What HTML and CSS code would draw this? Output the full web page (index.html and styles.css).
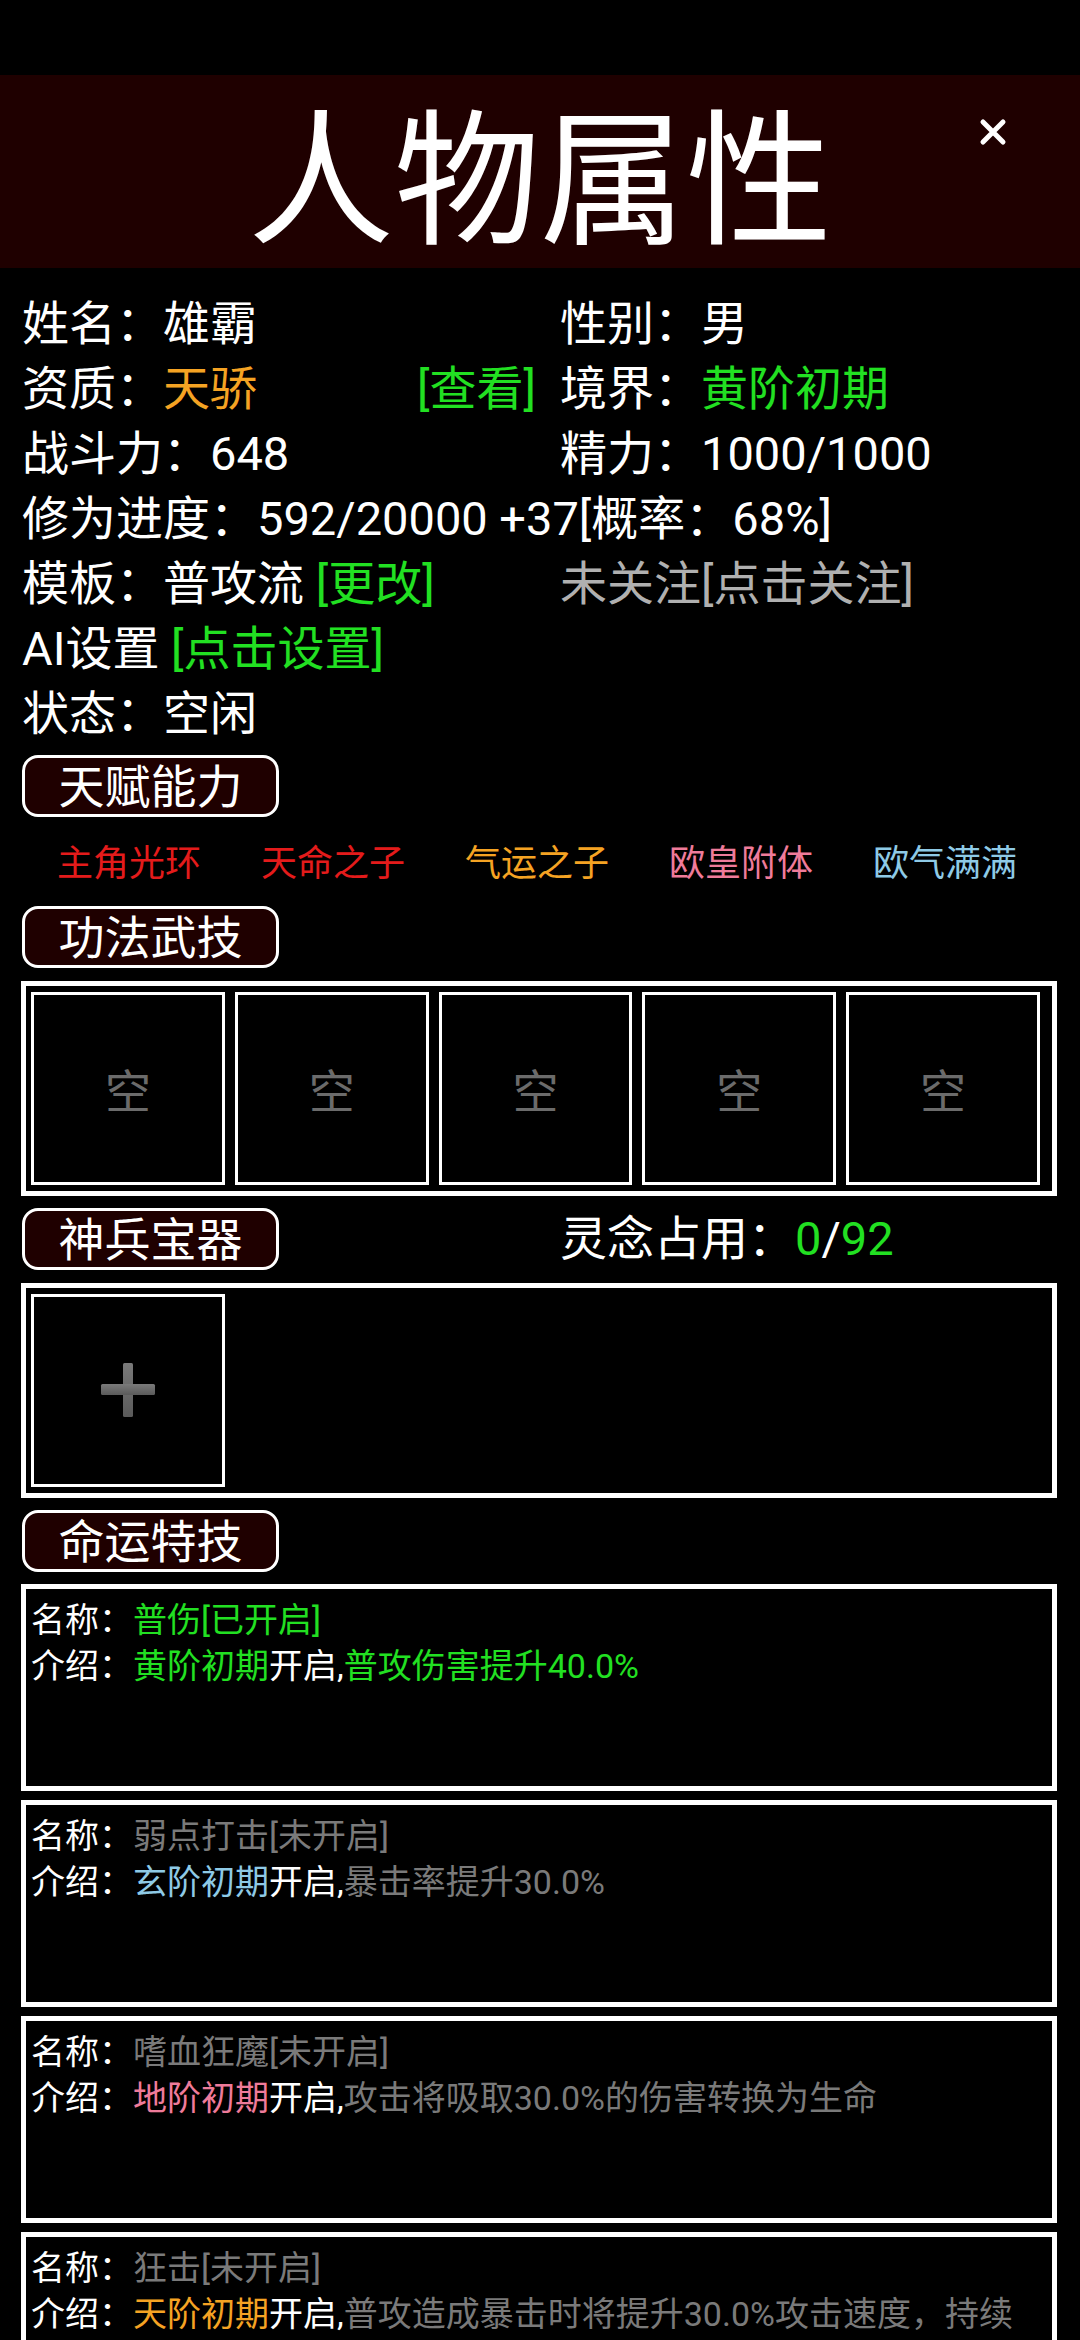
FILE: index.html
```html
<!DOCTYPE html>
<html lang="zh-CN">
<head>
    <meta charset="UTF-8">
    <meta name="viewport" content="width=device-width, initial-scale=1.0">
    <title>人物属性</title>
    <link rel="stylesheet" href="styles.css">
</head>
<body>

    <div class="status-bar"></div>

    <header class="title-bar">
        <h1>人物属性</h1>
        <button class="close-btn" aria-label="关闭">
            <svg width="28" height="28" viewBox="0 0 28 28">
                <path d="M4 4 L24 24 M24 4 L4 24" stroke="#fff" stroke-width="5" stroke-linecap="round" fill="none"/>
            </svg>
        </button>
    </header>

    <!-- Basic info -->
    <section class="info">
        <div>姓名：雄霸</div>
        <div>性别：男</div>

        <div class="split"><span>资质：<span class="orange">天骄</span></span><span class="green">[查看]</span></div>
        <div>境界：<span class="green">黄阶初期</span></div>

        <div>战斗力：648</div>
        <div>精力：1000/1000</div>

        <div class="wide">修为进度：592/20000 +37[概率：68%]</div>

        <div>模板：普攻流 <span class="green">[更改]</span></div>
        <div class="light-gray">未关注[点击关注]</div>

        <div class="wide">AI设置 <span class="green">[点击设置]</span></div>
        <div class="wide">状态：空闲</div>
    </section>

    <!-- Talents -->
    <div class="section-head">
        <div class="tag">天赋能力</div>
    </div>
    <div class="talents">
        <span class="red">主角光环</span>
        <span class="red">天命之子</span>
        <span class="orange">气运之子</span>
        <span class="pink">欧皇附体</span>
        <span class="blue">欧气满满</span>
    </div>

    <!-- Skills -->
    <div class="section-head">
        <div class="tag">功法武技</div>
    </div>
    <div class="slot-box">
        <div class="slot">空</div>
        <div class="slot">空</div>
        <div class="slot">空</div>
        <div class="slot">空</div>
        <div class="slot">空</div>
    </div>

    <!-- Treasures -->
    <div class="section-head spaced">
        <div class="tag">神兵宝器</div>
        <div class="spirit">灵念占用：<span class="green">0</span>/<span class="green">92</span></div>
    </div>
    <div class="slot-box">
        <div class="slot fixed">
            <svg width="56" height="56" viewBox="0 0 56 56">
                <defs>
                    <linearGradient id="plusShade" x1="0" y1="0" x2="0" y2="1">
                        <stop offset="0" stop-color="#7a7a7a"/>
                        <stop offset="1" stop-color="#5a5a5a"/>
                    </linearGradient>
                </defs>
                <rect x="23" y="1" width="10" height="54" rx="1.5" fill="url(#plusShade)"/>
                <rect x="1" y="22" width="54" height="11" rx="1.5" fill="url(#plusShade)"/>
            </svg>
        </div>
    </div>

    <!-- Fate skills -->
    <div class="section-head">
        <div class="tag">命运特技</div>
    </div>

    <div class="card">
        <div>名称：<span class="green">普伤[已开启]</span></div>
        <div>介绍：<span class="green">黄阶初期</span>开启,<span class="green">普攻伤害提升40.0%</span></div>
    </div>

    <div class="card">
        <div>名称：<span class="gray">弱点打击[未开启]</span></div>
        <div>介绍：<span class="blue">玄阶初期</span>开启,<span class="gray">暴击率提升30.0%</span></div>
    </div>

    <div class="card">
        <div>名称：<span class="gray">嗜血狂魔[未开启]</span></div>
        <div>介绍：<span class="pink">地阶初期</span>开启,<span class="gray">攻击将吸取30.0%的伤害转换为生命</span></div>
    </div>

    <div class="card">
        <div>名称：<span class="gray">狂击[未开启]</span></div>
        <div>介绍：<span class="orange">天阶初期</span>开启,<span class="gray">普攻造成暴击时将提升30.0%攻击速度，持续</span></div>
    </div>

</body>
</html>
```

FILE: styles.css
```css
body {
    margin: 0;
    background: #000;
    color: #fff;
    font-family: Roboto, "Noto Sans CJK SC", sans-serif;
    font-size: 47px;
}
.status-bar {
    height: 75px;
}
.title-bar {
    position: relative;
    height: 193px;
    background: #1f0000;
    display: flex;
    justify-content: center;
    align-items: center;
}
.title-bar h1 {
    margin: 22px 0 0;
    font-size: 146px;
    font-weight: 400;
    line-height: 1;
}
.close-btn {
    position: absolute;
    top: 43px;
    right: 73px;
    padding: 0;
    border: none;
    background: none;
    line-height: 0;
}
.info {
    display: grid;
    grid-template-columns: 514px 1fr;
    column-gap: 24px;
    padding: 23px 22px 0;
    line-height: 65px;
    white-space: nowrap;
}
.info .wide {
    grid-column: 1 / -1;
}
.split {
    display: flex;
    justify-content: space-between;
}
.section-head {
    display: grid;
    grid-template-columns: 514px 1fr;
    column-gap: 24px;
    align-items: center;
    padding: 0 22px;
    margin-top: 9px;
}
.tag {
    box-sizing: border-box;
    width: 257px;
    height: 62px;
    border: 3px solid #fff;
    border-radius: 16px;
    background: #1f0000;
    text-align: center;
    font-size: 46px;
    line-height: 52px;
    padding-top: 3px;
}
.spirit {
    line-height: 62px;
}
.talents {
    display: grid;
    grid-template-columns: repeat(5, 1fr);
    margin: 22px 33px 17px 27px;
    font-size: 36px;
    line-height: 50px;
    text-align: center;
}
.slot-box {
    box-sizing: border-box;
    display: flex;
    gap: 10px;
    margin: 13px 23px 0 21px;
    padding: 6px 12px 6px 5px;
    border: 5px solid #fff;
}
.slot {
    box-sizing: border-box;
    flex: 1;
    height: 193px;
    border: 3px solid #fff;
    display: flex;
    justify-content: center;
    align-items: center;
    color: #6b6b6b;
    font-size: 46px;
    padding-bottom: 2px;
}
.slot.fixed {
    flex: 0 0 194px;
}
.spaced {
    margin-top: 12px;
}
.slot-box + .section-head {
    margin-top: 12px;
}
.card {
    box-sizing: border-box;
    height: 207px;
    margin: 12px 23px 0 21px;
    padding: 8px 21px 0 5px;
    border: 5px solid #fff;
    font-size: 34px;
    line-height: 46px;
}
.card + .card {
    margin-top: 9px;
}
.green {
    color: #22e022;
}
.orange {
    color: #f5a323;
}
.red {
    color: #e41b1b;
}
.pink {
    color: #ef7b9a;
}
.blue {
    color: #8ecae6;
}
.gray {
    color: #7a7a7a;
}
.light-gray {
    color: #b0b0b0;
}
```
